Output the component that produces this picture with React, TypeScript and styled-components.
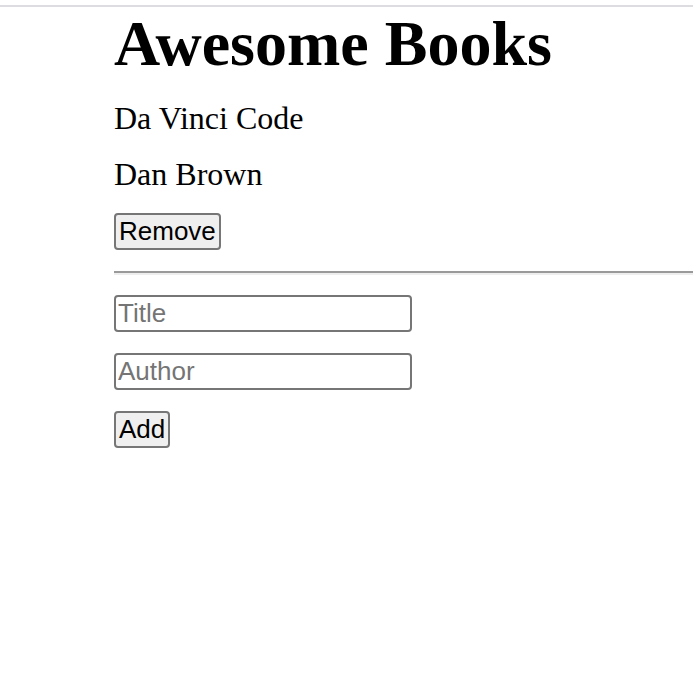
import React, { useState } from "react";
import styled, { createGlobalStyle } from "styled-components";

type Book = {
  id: number;
  title: string;
  author: string;
};

const initialBooks: Book[] = [
  { id: 1, title: "Da Vinci Code", author: "Dan Brown" },
];

const App = () => {
  const [books, setBooks] = useState<Book[]>(initialBooks);
  const [title, setTitle] = useState<string>("");
  const [author, setAuthor] = useState<string>("");

  const handleAdd = () => {
    if (!title || !author) return;
    setBooks([...books, { id: Date.now(), title, author }]);
    setTitle("");
    setAuthor("");
  };

  return (
    <>
      <GlobalStyle />
      <Page>
        <Heading>Awesome Books</Heading>
        {books.map((book) => (
          <BookItem key={book.id}>
            <Line top={19}>{book.title}</Line>
            <Line top={19}>{book.author}</Line>
            <Button top={20} onClick={() => setBooks(books.filter((b) => b.id !== book.id))}>
              Remove
            </Button>
            <Divider />
          </BookItem>
        ))}
        <Form
          onSubmit={(e) => {
            e.preventDefault();
            handleAdd();
          }}
        >
          <Field
            type="text"
            placeholder="Title"
            value={title}
            onChange={(e) => setTitle(e.target.value)}
          />
          <Field
            type="text"
            placeholder="Author"
            value={author}
            onChange={(e) => setAuthor(e.target.value)}
          />
          <Button top={21} type="submit">
            Add
          </Button>
        </Form>
      </Page>
    </>
  );
};

const GlobalStyle = createGlobalStyle`
  body {
    margin: 0;
    background: #ffffff;
    font-family: "Liberation Serif", "Times New Roman", serif;
    color: #000000;
  }
`;

const Page = styled.main`
  display: flex;
  flex-direction: column;
  align-items: flex-start;
  margin-top: 5px;
  padding-left: 114px;
  border-top: 2px solid #dcdce1;
  overflow: hidden;
`;

const Heading = styled.h1`
  margin: 0;
  font-size: 64px;
  line-height: 74px;
  font-weight: bold;
`;

const BookItem = styled.div`
  display: flex;
  flex-direction: column;
  align-items: flex-start;
  align-self: stretch;
`;

const Line = styled.p<{ top: number }>`
  margin: ${({ top }) => top}px 0 0;
  font-size: 32px;
  line-height: 37px;
`;

const Button = styled.button<{ top: number }>`
  margin-top: ${({ top }) => top}px;
  height: 37px;
  padding: 0 3px;
  font-family: "Liberation Sans", Arial, sans-serif;
  font-size: 26px;
  color: #000000;
  background: #efefef;
  border: 2px solid #767676;
  border-radius: 4px;
  cursor: pointer;
`;

const Divider = styled.hr`
  align-self: stretch;
  margin: 21px 0 0;
  border: none;
  border-top: 2px solid #9a9a9a;
  border-bottom: 2px solid #eeeeee;
`;

const Form = styled.form`
  display: flex;
  flex-direction: column;
  align-items: flex-start;
  gap: 0;
  padding-top: 20px;
`;

const Field = styled.input`
  box-sizing: border-box;
  width: 298px;
  height: 37px;
  margin-bottom: 21px;
  padding: 0 2px;
  font-family: "Liberation Sans", Arial, sans-serif;
  font-size: 26px;
  border: 2px solid #767676;
  border-radius: 4px;
  outline: none;

  &::placeholder {
    color: #757575;
  }

  & + & {
    margin-top: 0;
  }

  &:last-of-type {
    margin-bottom: 0;
  }
`;

export default App;
